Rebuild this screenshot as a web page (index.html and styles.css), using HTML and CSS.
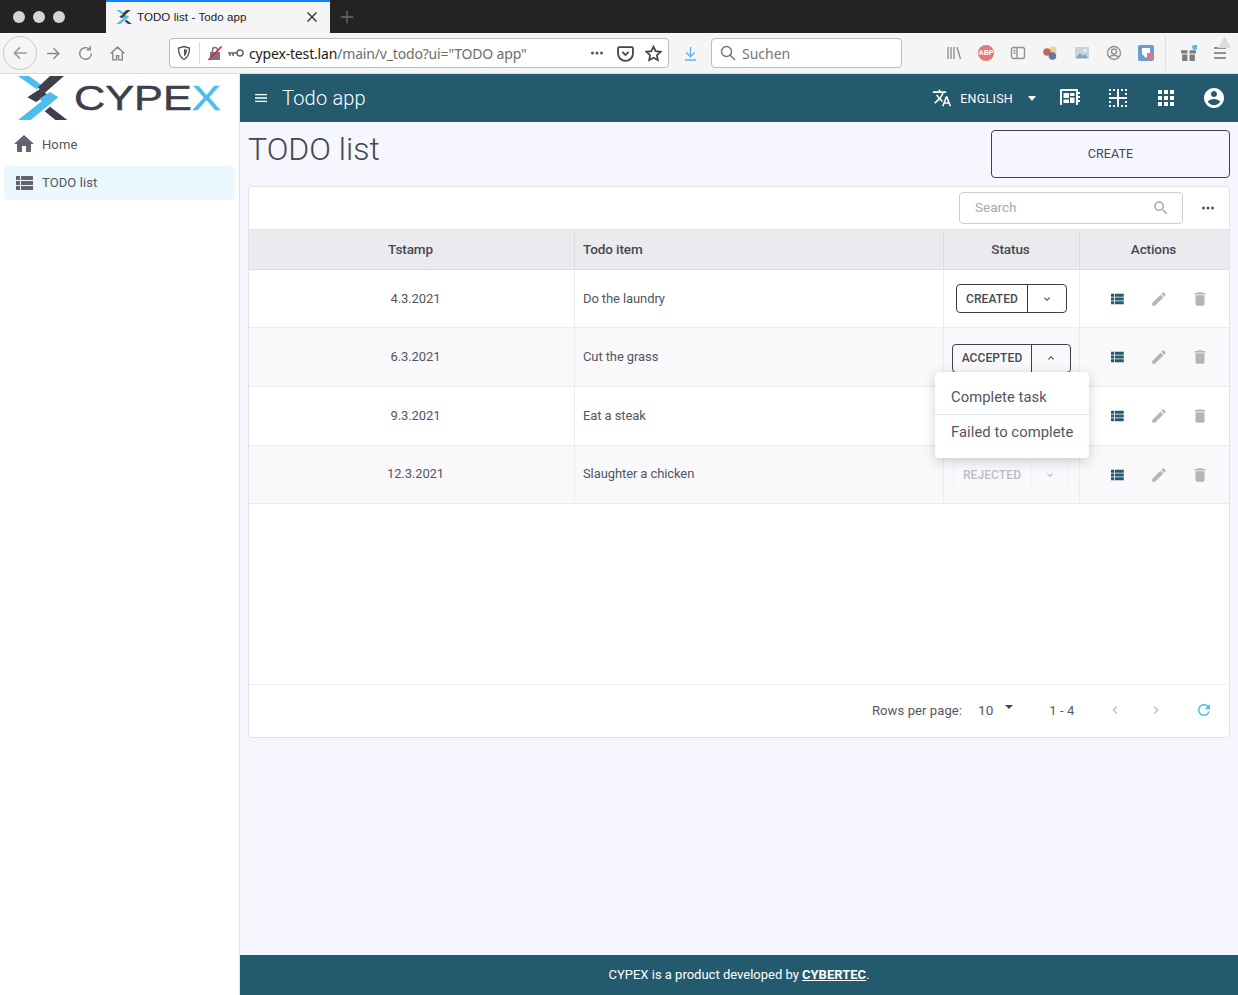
FILE: index.html
```html
<!DOCTYPE html>
<html lang="en">
<head>
<meta charset="utf-8">
<title>TODO list - Todo app</title>
<link rel="stylesheet" href="styles.css">
</head>
<body>
<svg class="sprites" width="0" height="0" aria-hidden="true">
  <symbol id="i-home" viewBox="0 0 24 24"><path d="M10 20v-6h4v6h5v-8h3L12 3 2 12h3v8z"/></symbol>
  <symbol id="i-list" viewBox="0 0 24 24"><path d="M4 14h4v-4H4v4zm0 5h4v-4H4v4zM4 9h4V5H4v4zm5 5h12v-4H9v4zm0 5h12v-4H9v4zM9 5v4h12V5H9z"/></symbol>
  <symbol id="i-edit" viewBox="0 0 24 24"><path d="M3 17.25V21h3.75L17.81 9.94l-3.75-3.75L3 17.25zM20.71 7.04c.39-.39.39-1.02 0-1.41l-2.34-2.34c-.39-.39-1.02-.39-1.41 0l-1.83 1.83 3.75 3.75 1.83-1.83z"/></symbol>
  <symbol id="i-del" viewBox="0 0 24 24"><path d="M6 19c0 1.1.9 2 2 2h8c1.1 0 2-.9 2-2V7H6v12zM19 4h-3.5l-1-1h-5l-1 1H5v2h14V4z"/></symbol>
  <symbol id="i-translate" viewBox="0 0 24 24"><path d="M12.87 15.07l-2.54-2.51.03-.03c1.74-1.94 2.98-4.17 3.71-6.53H17V4h-7V2H8v2H1v1.99h11.17C11.5 7.92 10.44 9.75 9 11.35 8.07 10.32 7.3 9.19 6.69 8h-2c.73 1.63 1.73 3.17 2.98 4.56l-5.09 5.02L4 19l5-5 3.11 3.11.76-2.04zM18.5 10h-2L12 22h2l1.12-3h4.75L21 22h2l-4.5-12zm-2.62 7l1.62-4.33L19.12 17h-3.24z"/></symbol>
  <symbol id="i-account" viewBox="0 0 24 24"><path d="M12 2C6.48 2 2 6.48 2 12s4.48 10 10 10 10-4.48 10-10S17.52 2 12 2zm0 3c1.66 0 3 1.34 3 3s-1.34 3-3 3-3-1.34-3-3 1.34-3 3-3zm0 14.2c-2.5 0-4.71-1.28-6-3.22.03-1.99 4-3.08 6-3.08 1.99 0 5.97 1.09 6 3.08-1.29 1.94-3.5 3.22-6 3.22z"/></symbol>
  <symbol id="i-apps" viewBox="0 0 24 24"><path d="M4 8h4V4H4v4zm6 12h4v-4h-4v4zm-6 0h4v-4H4v4zm0-6h4v-4H4v4zm6 0h4v-4h-4v4zm6-10v4h4V4h-4zm-6 4h4V4h-4v4zm6 6h4v-4h-4v4zm0 6h4v-4h-4v4z"/></symbol>
  <symbol id="i-menu" viewBox="0 0 24 24"><path d="M3 18h18v-2H3v2zm0-5h18v-2H3v2zm0-7v2h18V6H3z"/></symbol>
  <symbol id="i-refresh" viewBox="0 0 24 24"><path d="M17.65 6.35C16.2 4.9 14.21 4 12 4c-4.42 0-7.99 3.58-7.99 8s3.57 8 7.99 8c3.73 0 6.84-2.55 7.73-6h-2.08c-.82 2.33-3.04 4-5.65 4-3.31 0-6-2.69-6-6s2.69-6 6-6c1.66 0 3.14.69 4.22 1.78L13 11h7V4l-2.35 2.35z"/></symbol>
  <symbol id="i-search" viewBox="0 0 24 24"><path d="M15.5 14h-.79l-.28-.27C15.41 12.59 16 11.11 16 9.5 16 5.91 13.09 3 9.5 3S3 5.91 3 9.5 5.91 16 9.5 16c1.61 0 3.09-.59 4.23-1.57l.27.28v.79l5 4.99L20.49 19l-4.99-5zm-6 0C7.01 14 5 11.99 5 9.5S7.01 5 9.5 5 14 7.01 14 9.5 11.99 14 9.5 14z"/></symbol>
  <symbol id="i-down" viewBox="0 0 24 24"><path d="M7.41 8.59L12 13.17l4.59-4.58L18 10l-6 6-6-6z"/></symbol>
  <symbol id="i-up" viewBox="0 0 24 24"><path d="M7.41 15.41L12 10.83l4.59 4.58L18 14l-6-6-6 6z"/></symbol>
  <symbol id="i-left" viewBox="0 0 24 24"><path d="M15.41 7.41L14 6l-6 6 6 6 1.41-1.41L10.83 12z"/></symbol>
  <symbol id="i-right" viewBox="0 0 24 24"><path d="M8.59 16.59L10 18l6-6-6-6-1.41 1.41L13.17 12z"/></symbol>
  <symbol id="i-more" viewBox="0 0 24 24"><path d="M6 10a2 2 0 100 4 2 2 0 000-4zm12 0a2 2 0 100 4 2 2 0 000-4zm-6 0a2 2 0 100 4 2 2 0 000-4z"/></symbol>
  <symbol id="i-mark" viewBox="0 0 180 144">
    <polygon points="12,6 45,6 84,34 68,46" fill="#4dbdec"/>
    <polygon points="108,6 150,6 93,56 100,62 66,84 40,70 77,46 72,40" fill="#3f3f4b"/>
    <polygon points="108,54 133,70 50,138 12,138 83,82 76,74" fill="#4dbdec"/>
    <polygon points="92,112 108,98 160,138 124,138" fill="#3f3f4b"/>
  </symbol>
</svg>

<div class="browser">
  <div class="tabstrip">
    <div class="lights"><i></i><i></i><i></i></div>
    <div class="tab">
      <svg class="tab-mark"><use href="#i-mark"/></svg>
      <span class="tab-title">TODO list - Todo app</span>
      <svg class="tab-close" viewBox="0 0 12 12"><path d="M1.500 1.500l9 9M10.500 1.500l-9 9"/></svg>
    </div>
    <svg class="tab-new" viewBox="0 0 16 16"><path d="M8 1v14M1 8h14"/></svg>
  </div>
  <div class="navbar">
    <span class="back"><svg viewBox="0 0 16 16"><path d="M14 8H3M8 3L3 8l5 5"/></svg></span>
    <svg class="nav-ic nav-fwd" viewBox="0 0 16 16"><path d="M2 8h11M8 3l5 5-5 5"/></svg>
    <svg class="nav-ic" viewBox="0 0 16 16"><path d="M13.500 8a5.500 5.500 0 11-1.700-4M12.500 1v3.500H9"/></svg>
    <svg class="nav-ic" viewBox="0 0 16 16"><path d="M1.500 8L8 2l6.500 6M3.500 7v7h3.500v-4h2v4h3.500V7"/></svg>
    <div class="urlbar">
      <svg class="shield" viewBox="0 0 16 16"><path d="M8 1.500l5.500 1.500c0 5-1 9-5.500 11.500C3.500 12 2.500 8 2.500 3z"/><path class="shield-in" d="M8 4l3 .8c0 3-.6 5-3 6.700z"/></svg>
      <span class="url-sep"></span>
      <svg class="lock" viewBox="0 0 16 16"><path class="lock-shackle" d="M5.500 7V5a2.500 2.500 0 015 0v2"/><path class="lock-body" d="M3 7h10v8H3z"/><path class="lock-slash" d="M1.500 15L14.500 1.500"/></svg>
      <svg class="key" viewBox="0 0 18 10"><circle cx="13" cy="5" r="3"/><path d="M10 5H1M3 5v3M6 5v3"/></svg>
      <span class="url"><b>cypex-test.lan</b>/main/v_todo?ui="TODO app"</span>
      <svg class="url-more"><use href="#i-more"/></svg>
      <svg class="pocket" viewBox="0 0 16 16"><path d="M2 2h12a1 1 0 011 1v5a7 7 0 01-14 0V3a1 1 0 011-1zM5 6.500l3 3 3-3"/></svg>
      <svg class="star" viewBox="0 0 16 16"><path d="M8 1.500l2 4.300 4.700.6-3.500 3.200.9 4.700L8 12l-4.100 2.300.9-4.700L1.300 6.400 6 5.800z"/></svg>
    </div>
    <svg class="dl" viewBox="0 0 16 16"><path d="M8 1v10M3.500 7L8 11.500 12.500 7M2 15h12"/></svg>
    <div class="searchbar">
      <svg viewBox="0 0 16 16"><circle cx="6.500" cy="6.500" r="5"/><path d="M10 10l5 5"/></svg>
      <span>Suchen</span>
    </div>
    <div class="ext">
      <svg class="ext-ic" viewBox="0 0 16 16"><path d="M2 2v12M5 2v12M8 2v12M11 2l3.500 12"/></svg>
      <span class="abp">ABP</span>
      <svg class="ext-ic" viewBox="0 0 16 16"><rect x="1.500" y="2.500" width="13" height="11" rx="2"/><path d="M7 2.500v11M3.500 5.500h2M3.500 8h2"/></svg>
      <svg class="ext-balls" viewBox="0 0 16 16"><circle cx="11" cy="5" r="3.500" fill="#e9d48a"/><circle cx="5" cy="7" r="3.800" fill="#c2665f"/><circle cx="10.500" cy="11" r="3.800" fill="#5f78a8"/></svg>
      <svg class="ext-photo" viewBox="0 0 16 16"><rect x="1" y="2" width="14" height="12" fill="#c4d4e0"/><path d="M2 13l4-5 3 3 2-2 3 4z" fill="#8aa2b4"/><circle cx="11" cy="5.500" r="1.300" fill="#fff"/></svg>
      <svg class="ext-ic ext-gap" viewBox="0 0 16 16"><circle cx="8" cy="8" r="6.500"/><circle cx="8" cy="6.500" r="2.500"/><path d="M3.500 12.500c1-3 8-3 9 0"/></svg>
      <svg class="ext-bit" viewBox="0 0 16 16"><rect x="0" y="0" width="16" height="16" rx="2" fill="#6d9bd8"/><path d="M4 3h8v6l-4 4-4-4z" fill="#fff"/><rect x="9" y="8" width="6" height="7" fill="#e07a7a"/></svg>
      <span class="ext-sep"></span>
      <svg class="ext-gift" viewBox="0 0 16 16"><path d="M1 5h6v3H1zM9 5h6v3H9zM2 9h5v6H2zM9 9h5v6H9z" fill="#7d7d7d"/><circle cx="14" cy="2" r="2.500" fill="#54b9ee"/></svg>
      <span class="burger">
        <svg class="ext-ic" viewBox="0 0 16 16"><path d="M2 3h12M2 8h12M2 13h12"/></svg>
        <svg class="warn" viewBox="0 0 14 14"><path d="M7 0l7 13H0z"/></svg>
      </span>
    </div>
  </div>
</div>

<div class="app">
  <aside class="sidebar">
    <div class="logo">
      <svg class="logo-mark"><use href="#i-mark"/></svg>
      <span class="logo-text">CYPE<em>X</em></span>
    </div>
    <nav class="menu">
      <a class="menu-item"><svg class="menu-ic"><use href="#i-home"/></svg>Home</a>
      <a class="menu-item active"><svg class="menu-ic"><use href="#i-list"/></svg>TODO list</a>
    </nav>
  </aside>
  <div class="content">
    <header class="topbar">
      <svg class="tb-menu"><use href="#i-menu"/></svg>
      <span class="tb-title">Todo app</span>
      <span class="tb-spacer"></span>
      <svg class="tb-ic"><use href="#i-translate"/></svg>
      <span class="tb-lang">ENGLISH</span>
      <span class="tb-caret"></span>
      <svg class="tb-ic tb-a" viewBox="0 0 24 24"><path fill-rule="evenodd" d="M3 3h16a1 1 0 011 1v2h2v2h-2v2h2v2h-2v2h2v2h-2v2a1 1 0 01-1 1H3a1 1 0 01-1-1V4a1 1 0 011-1zm1 2v14h14V5zm1.500 2H11v5H5.500zm6.500 0h4.500v3H12zm0 4.500h4.500V17H12zM5.500 13.500H11V17H5.500z"/></svg>
      <svg class="tb-ic tb-a" viewBox="0 0 24 24"><path d="M3 3h2v2H3zm4 0h2v2H7zm4 0h2v8h8v2h-8v8h-2v-8H3v-2h8zm4 0h2v2h-2zm4 0h2v2h-2zM3 7h2v2H3zm16 0h2v2h-2zM3 15h2v2H3zm16 0h2v2h-2zM3 19h2v2H3zm4 0h2v2H7zm8 0h2v2h-2zm4 0h2v2h-2z"/></svg>
      <svg class="tb-ic tb-a"><use href="#i-apps"/></svg>
      <svg class="tb-ic tb-a"><use href="#i-account"/></svg>
    </header>
    <main class="page">
      <div class="page-head">
        <h1>TODO list</h1>
        <button class="create">CREATE</button>
      </div>
      <section class="card">
        <div class="card-tools">
          <div class="search-field"><span>Search</span><svg><use href="#i-search"/></svg></div>
          <svg class="more"><use href="#i-more"/></svg>
        </div>
        <div class="grid">
          <div class="row head">
            <div class="c c1">Tstamp</div><div class="c c2">Todo item</div><div class="c c3">Status</div><div class="c c4">Actions</div>
          </div>
          <div class="row r1">
            <div class="c c1 date">4.3.2021</div><div class="c c2">Do the laundry</div>
            <div class="c c3"><div class="split created"><span>CREATED</span><span class="arrow"><svg><use href="#i-down"/></svg></span></div></div>
            <div class="c c4 acts"><svg class="a-list"><use href="#i-list"/></svg><svg class="a-grey"><use href="#i-edit"/></svg><svg class="a-grey"><use href="#i-del"/></svg></div>
          </div>
          <div class="row r2 alt">
            <div class="c c1 date">6.3.2021</div><div class="c c2">Cut the grass</div>
            <div class="c c3"><div class="split accepted"><span>ACCEPTED</span><span class="arrow"><svg><use href="#i-up"/></svg></span></div></div>
            <div class="c c4 acts"><svg class="a-list"><use href="#i-list"/></svg><svg class="a-grey"><use href="#i-edit"/></svg><svg class="a-grey"><use href="#i-del"/></svg></div>
          </div>
          <div class="row r3">
            <div class="c c1 date">9.3.2021</div><div class="c c2">Eat a steak</div>
            <div class="c c3"></div>
            <div class="c c4 acts"><svg class="a-list"><use href="#i-list"/></svg><svg class="a-grey"><use href="#i-edit"/></svg><svg class="a-grey"><use href="#i-del"/></svg></div>
          </div>
          <div class="row r4 alt">
            <div class="c c1 date">12.3.2021</div><div class="c c2">Slaughter a chicken</div>
            <div class="c c3"><div class="split rejected"><span>REJECTED</span><span class="arrow"><svg><use href="#i-down"/></svg></span></div></div>
            <div class="c c4 acts"><svg class="a-list"><use href="#i-list"/></svg><svg class="a-grey"><use href="#i-edit"/></svg><svg class="a-grey"><use href="#i-del"/></svg></div>
          </div>
        </div>
        <div class="pager">
          <span class="rpp">Rows per page:</span>
          <span class="rpp-val">10</span>
          <span class="rpp-caret"></span>
          <span class="range">1 - 4</span>
          <svg class="pg pg-prev"><use href="#i-left"/></svg>
          <svg class="pg"><use href="#i-right"/></svg>
          <svg class="pg-refresh"><use href="#i-refresh"/></svg>
        </div>
        <div class="dropmenu">
          <div class="drop-item">Complete task</div>
          <div class="drop-item">Failed to complete</div>
        </div>
      </section>
    </main>
    <footer class="foot">CYPEX is a product developed by&nbsp;<a>CYBERTEC</a>.</footer>
  </div>
</div>
</body>
</html>
```
FILE: styles.css
```css
* { box-sizing: border-box; }
html, body { margin: 0; height: 100%; }
body {
  width: 1238px;
  height: 995px;
  overflow: hidden;
  font-family: Roboto, "Liberation Sans", sans-serif;
  color: #474752;
  display: flex;
  flex-direction: column;
  background: #fff;
}
.sprites { position: absolute; }
svg { display: block; flex: none; }

/* browser chrome */
.browser { flex: none; height: 74px; display: flex; flex-direction: column; }
.tabstrip { height: 33px; background: #232323; display: flex; align-items: center; }
.lights { width: 106px; display: flex; gap: 8px; padding-left: 13px; }
.lights i { width: 12px; height: 12px; border-radius: 50%; background: #d4d4d4; }
.tab {
  width: 224px; height: 33px; background: #f5f5f5; border-top: 2px solid #0a84ff;
  display: flex; align-items: center; padding: 0 12px 2px 9px;
  font: 11.500px "Liberation Sans", Roboto, sans-serif; color: #202020; letter-spacing: .1px;
}
.tab-mark { width: 19px; height: 16px; margin-right: 3px; }
.tab-title { flex: 1; white-space: nowrap; }
.tab-close { width: 12px; height: 12px; fill: none; stroke: #333; stroke-width: 1.400; }
.tab-new { width: 14px; height: 14px; margin-left: 10px; fill: none; stroke: #6e6e6e; stroke-width: 1.500; }
.navbar {
  height: 41px; background: #f5f5f5; border-bottom: 1px solid #dcdcdc;
  display: flex; align-items: center; padding: 0 0 0 3px;
}
.navbar svg { fill: none; stroke: #8a8a8a; stroke-width: 1.400; }
.back {
  width: 34px; height: 34px; border: 1px solid #c9c9c9; border-radius: 50%;
  display: flex; align-items: center; justify-content: center;
}
.back svg { width: 18px; height: 18px; stroke: #999; }
.nav-ic { width: 17px; height: 17px; margin-left: 15px; }
.nav-fwd { margin-left: 8px; }
.urlbar {
  width: 500px; height: 30px; margin-left: 43px; background: #fff; border: 1px solid #bbb; border-radius: 4px;
  display: flex; align-items: center; padding-left: 6px;
}
.navbar .shield { width: 16px; height: 16px; stroke: #555; }
.shield-in { fill: #555; stroke: none; }
.url-sep { width: 1px; height: 22px; background: #ddd; margin: 0 7px 0 7px; }
.navbar .lock { width: 16px; height: 16px; }
.lock-shackle { stroke: #777; stroke-width: 1.500; }
.lock-body { fill: #777; stroke: none; }
.navbar .lock-slash { stroke: #e3204a; stroke-width: 1.800; }
.navbar .key { width: 18px; height: 10px; margin: 0 4px 0 4px; stroke: #666; stroke-width: 1.500; }
.url { flex: 1; font: 14px "Noto Sans", Roboto, sans-serif; color: #6d6d6d; white-space: nowrap; letter-spacing: -.17px; }
.url b { font-weight: 400; color: #1a1a1a; }
.navbar .url-more { width: 18px; height: 18px; fill: #555; stroke: none; margin-right: 11px; }
.navbar .pocket { width: 17px; height: 17px; stroke: #444; margin-right: 11px; stroke-width: 1.700; }
.navbar .star { width: 17px; height: 17px; stroke: #444; margin-right: 6px; stroke-width: 1.600; }
.navbar .dl { width: 15px; height: 17px; margin-left: 14px; stroke: #62b0f5; stroke-width: 1.500; }
.searchbar {
  width: 191px; height: 30px; margin-left: 13px; background: #fff; border: 1px solid #bbb; border-radius: 4px;
  display: flex; align-items: center; padding-left: 8px; gap: 6px;
  font: 14px "Noto Sans", Roboto, sans-serif; color: #777;
}
.navbar .searchbar svg { width: 16px; height: 16px; stroke: #777; stroke-width: 1.500; }
.ext { display: flex; align-items: center; margin-left: 44px; }
.navbar .ext-ic { width: 16px; height: 16px; stroke: #929292; }
.abp {
  width: 16px; height: 16px; margin: 0 16px; border-radius: 50%; background: #e07a7a; color: #fff;
  font: 700 7px/16px "Liberation Sans", sans-serif; text-align: center;
}
.navbar .ext-balls, .navbar .ext-photo, .navbar .ext-bit { width: 16px; height: 16px; stroke: none; margin-left: 16px; }
.ext .ext-gap { margin-left: 16px; }
.ext-sep { width: 1px; height: 34px; background: #dedede; margin: 0 14px 0 11px; }
.navbar .ext-gift { width: 17px; height: 17px; stroke: none; }
.burger { position: relative; margin-left: 15px; display: block; }
.navbar .burger .ext-ic { stroke-width: 1.800; }
.navbar .warn { position: absolute; left: 6px; top: -9px; width: 13px; height: 13px; fill: #dcdcdc; stroke: none; }

/* app */
.app { flex: 1; min-height: 0; display: flex; }
.sidebar { width: 240px; flex: none; border-right: 1px solid #e1e1e6; background: #fff; }
.logo { height: 48px; display: flex; align-items: center; padding-left: 14px; overflow: hidden; }
.logo-mark { width: 60px; height: 48px; }
.logo-text {
  font: 400 35px/48px "Liberation Sans", sans-serif; color: #3f3f4b; display: inline-block;
  transform: scaleX(1.235); transform-origin: left center; margin-left: 0; white-space: nowrap;
  -webkit-text-stroke: .5px currentColor;
}
.logo-text em { font-style: normal; color: #4dbdec; }
.menu { padding: 5px 4px; display: flex; flex-direction: column; gap: 5px; }
.menu-item {
  height: 34px; display: flex; align-items: center; padding-left: 8px; border-radius: 4px;
  font-size: 13px; letter-spacing: .1px; color: #55555f;
}
.menu-item.active { background: #ebf8fe; padding-bottom: 1px; }
.menu-ic { width: 24px; height: 24px; margin-right: 6px; fill: #63636d; }
.content { flex: 1; min-width: 0; display: flex; flex-direction: column; }
.topbar {
  height: 48px; flex: none; background: #245a6e; color: #fff; display: flex; align-items: center;
  padding: 0 12px 0 13px;
}
.tb-menu { width: 16px; height: 16px; fill: #fff; margin-right: 13px; }
.tb-title { font-size: 20px; font-weight: 300; letter-spacing: .2px; }
.tb-spacer { flex: 1; }
.tb-ic { width: 20px; height: 20px; fill: #fff; }
.tb-lang { font-size: 12.500px; font-weight: 400; margin-left: 8px; letter-spacing: .25px; }
.tb-caret { width: 0; height: 0; border: 4px solid transparent; border-top: 5px solid #fff; border-bottom: 0; margin: 0 0 0 15px; }
.tb-a { width: 24px; height: 24px; margin-left: 24px; }
.tb-caret + .tb-a { margin-left: 22px; }
.page { flex: 1; min-height: 0; background: #f6f6fe; padding: 8px 8px 0; }
.page-head { height: 56px; display: flex; justify-content: space-between; align-items: flex-start; }
.page-head h1 { margin: 0; font-size: 32px; font-weight: 300; line-height: 38px; letter-spacing: 0; color: #474752; }
.create {
  width: 239px; height: 48px; background: transparent; border: 1px solid #3f3f4b; border-radius: 4px; padding: 0 0 2px;
  font: 400 12.500px Roboto, sans-serif; color: #474752; letter-spacing: .1px;
}
.card {
  position: relative; height: 552px; background: #fff; border: 1px solid #e1e1e6; border-radius: 4px;
  display: flex; flex-direction: column;
}
.card-tools { height: 42px; flex: none; display: flex; align-items: center; justify-content: flex-end; padding: 0 12px 0 0; }
.search-field {
  width: 224px; height: 32px; border: 1px solid #ccc; border-radius: 4px; display: flex; align-items: center;
  justify-content: space-between; padding: 0 15px 2px; font-size: 13.500px; color: #a8a8ae;
}
.search-field svg { width: 18px; height: 18px; fill: #aaa; margin: 2px -3px 0 0; }
.more { width: 18px; height: 18px; fill: #55555f; margin-left: 16px; }
.grid { flex: 1; min-height: 0; display: flex; flex-direction: column; }
.row { display: grid; grid-template-columns: 326px 369px 136px 1fr; border-bottom: 1px solid #ececf0; height: 59px; flex: none; }
.row.r1 { height: 58px; }
.row.r4 { height: 58px; }
.row.alt { background: #f9f9fc; }
.row.head { height: 41px; background: #ebebef; border-bottom-color: #dcdce1; border-top: 1px solid #e1e1e6; font-weight: 500; color: #474752; }
.c { display: flex; align-items: center; font-size: 13px; letter-spacing: -.1px; border-right: 1px solid #ececf0; padding-left: 8px; color: #55555f; }
.head .c { font-size: 13.500px; color: #474752; border-right-color: #dcdce1; padding-bottom: 2px; }
.head .c1, .head .c3, .head .c4 { justify-content: center; padding: 0 2px 2px 0; }
.c4 { border-right: 0; }
.date { justify-content: center; padding: 0 0 0 8px; }
.r2 .c1, .r2 .c2, .r3 .c1, .r3 .c2, .r4 .c1, .r4 .c2 { padding-bottom: 2px; }
.c3 { justify-content: center; padding: 0; }
.split {
  display: flex; align-items: stretch; height: 29px; border: 1px solid #3f3f4b; border-radius: 4px;
  font-size: 12px; font-weight: 500; color: #474752;
}
.split span { display: flex; align-items: center; justify-content: center; }
.split span:first-child { letter-spacing: .1px; }
.arrow { border-left: 1px solid #3f3f4b; }
.arrow svg { width: 12px; height: 12px; fill: #474752; }
.created { width: 111px; }
.created span:first-child { width: 70px; }
.created .arrow { width: 39px; }
.accepted { width: 119px; margin-top: 2px; }
.accepted span:first-child { width: 78px; }
.accepted .arrow { width: 39px; }
.rejected { width: 116px; border-color: #f2f2f7; color: #bcbcc2; margin: 0 2px 0 0; }
.rejected span:first-child { width: 77px; }
.rejected .arrow { width: 37px; border-left-color: #f2f2f7; }
.rejected .arrow svg { fill: #bcbcc2; }
.c.acts { padding: 0 0 0 28px; gap: 23.500px; }
.acts svg { width: 18px; height: 18px; }
.a-list { fill: #245a6e; }
.a-grey { fill: #b5b5b5; }
.pager {
  height: 53px; flex: none; border-top: 1px solid #f1f1f4; display: flex; align-items: center;
  font-size: 13px; color: #55555f; padding: 0 0 2px 623px;
}
.rpp { letter-spacing: .1px; }
.rpp-val { margin-left: 16px; font-size: 13.500px; }
.rpp-caret { width: 0; height: 0; border: 4px solid transparent; border-top: 4px solid #474752; border-bottom: 0; margin: -6px 0 0 12px; }
.range { margin-left: 36px; letter-spacing: .1px; }
.pg { width: 16px; height: 16px; fill: #bdbdc2; margin-left: 25px; }
.pg-prev { margin-left: 33px; }
.pg-refresh { width: 18px; height: 18px; fill: #4dbdec; margin-left: 31px; }
.dropmenu {
  position: absolute; left: 686px; top: 185px; width: 154px; height: 86px; background: #fff; border-radius: 4px;
  box-shadow: 0 3px 12px rgba(40, 40, 60, .22); z-index: 2; padding-top: 8px;
}
.drop-item { height: 34px; padding-left: 16px; display: flex; align-items: center; font-size: 14.800px; color: #55555f; white-space: nowrap; letter-spacing: .05px; }
.drop-item:first-child { border-bottom: 1px solid #e4e4e8; height: 35px; }
.foot {
  height: 40px; flex: none; background: #245a6e; color: #fff; display: flex; align-items: center; justify-content: center;
  font-size: 13px; padding-bottom: 2px;
}
.foot a { font-weight: 700; text-decoration: underline; }
```
